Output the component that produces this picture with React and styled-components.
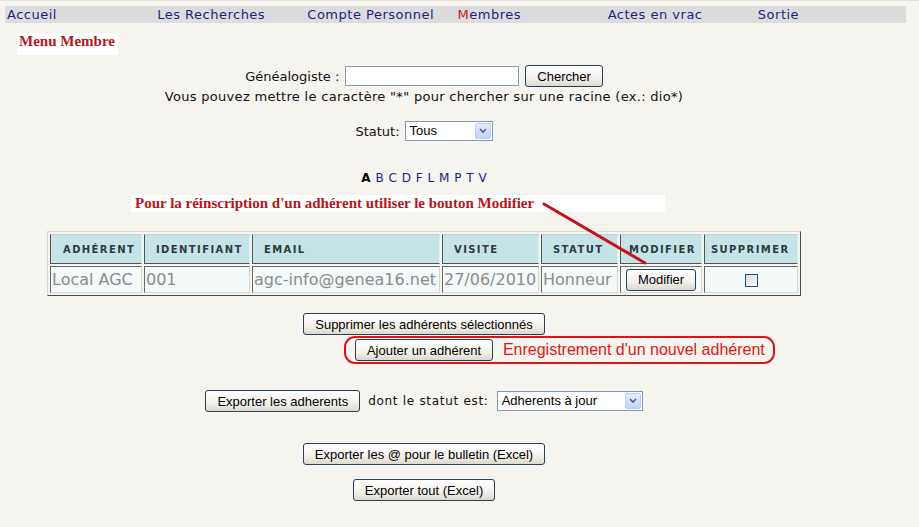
import React from 'react';
import styled, { createGlobalStyle } from 'styled-components';

const GlobalStyle = createGlobalStyle`
  body {
    margin: 0;
    background: #f5f4ee;
    font-family: "DejaVu Sans", Verdana, sans-serif;
  }
`;

const Page = styled.div`
  position: relative;
  width: 919px;
  min-height: 527px;
  border-top: 1px solid #e2e1dc;
  box-sizing: border-box;
`;

const Nav = styled.nav`
  display: flex;
  width: 901px;
  height: 17px;
  margin: 5px 0 0 5px;
  background: #dcdcdc;
`;

const NavLink = styled.a`
  width: 150px;
  padding-left: 2px;
  font-size: 13px;
  letter-spacing: 0.5px;
  line-height: 17px;
  color: #1c1c8c;
  text-decoration: none;
  span { color: #c8161e; }
`;

const MenuTitle = styled.div`
  display: inline-block;
  margin: 10px 0 0 17px;
  padding: 0 3px 0 2px;
  height: 22px;
  line-height: 22px;
  background: #fff;
  font: bold 15px "Liberation Serif", "Times New Roman", serif;
  color: #b5161e;
`;

const Main = styled.div`
  display: flex;
  flex-direction: column;
  align-items: center;
  width: 848px;
`;

const Row = styled.div`
  display: flex;
  align-items: center;
  gap: ${p => p.$gap || 6}px;
  margin-top: ${p => p.$top || 0}px;
  font-size: 13px;
  color: #111;
`;

const Hint = styled.div`
  font-size: 13px;
  letter-spacing: 0.3px;
  line-height: 16px;
  color: #111;
  margin-top: 2px;
`;

const TextInput = styled.input`
  width: 174px;
  height: 20px;
  box-sizing: border-box;
  border: 1px solid #7f9db9;
  background: #fff;
  margin: 0;
`;

const Button = styled.button`
  height: 22px;
  margin: 0;
  margin-top: ${p => p.$top || 0}px;
  padding: 0 11px;
  font: 13px "Liberation Sans", Arial, sans-serif;
  color: #000;
  border: 1px solid #2b3f55;
  border-radius: 3px;
  background: linear-gradient(#ffffff, #f2f1ec 60%, #dcd8cc);
  white-space: nowrap;
`;

const SelectBox = styled.div`
  position: relative;
  width: ${p => p.$width}px;
  height: 20px;
  box-sizing: border-box;
  border: 1px solid #7f9db9;
  background: #fff;
  font: 13px "Liberation Sans", Arial, sans-serif;
  line-height: 18px;
  padding-left: 4px;
  color: #000;
  text-align: left;
`;

const SelectArrow = styled.span`
  position: absolute;
  top: 1px;
  right: 1px;
  width: 16px;
  height: 16px;
  box-sizing: border-box;
  border: 1px solid #b9ccf2;
  border-radius: 2px;
  background: linear-gradient(#e3ebfd, #c3d4f9);
  display: flex;
  align-items: center;
  justify-content: center;
`;

const Letters = styled.div`
  margin-top: 30px;
  font-size: 12px;
  line-height: 14px;
  word-spacing: 1px;
  a { color: #1c1c8c; text-decoration: none; }
  b { color: #000; }
`;

const Notice = styled.div`
  align-self: flex-start;
  margin: 10px 0 0 131px;
  width: 534px;
  height: 17px;
  padding-left: 4px;
  box-sizing: border-box;
  background: #fff;
  font: bold 15px "Liberation Serif", "Times New Roman", serif;
  line-height: 17px;
  color: #b5161e;
  white-space: nowrap;
`;

const Table = styled.table`
  margin-top: 19px;
  border-collapse: separate;
  border-spacing: 2px;
  border: 1px solid;
  border-color: #d8d8d4 #4a4a4a #4a4a4a #d8d8d4;
  table-layout: fixed;
  width: 754px;
`;

const Th = styled.th`
  width: ${p => p.$w}px;
  box-sizing: border-box;
  height: 30px;
  padding: 0 0 0 ${p => p.$pad || 11}px;
  text-align: left;
  background: #c6e3e7;
  border-left: 1px solid #555;
  border-top: 1px solid #b5d6da;
  border-right: 1px solid #d9eef0;
  border-bottom: 1px solid #555;
  font-size: 10px;
  font-weight: bold;
  letter-spacing: 1.4px;
  color: #2d3b3c;
  white-space: nowrap;
  overflow: hidden;
`;

const Td = styled.td`
  box-sizing: border-box;
  height: 27px;
  padding: 0 1px;
  background: #f4f9f9;
  border: 1px solid;
  border-color: #6a6a6a #d6d6d2 #d6d6d2 #6a6a6a;
  font-size: 16px;
  color: #8c8c8c;
  text-align: ${p => (p.$center ? 'center' : 'left')};
  white-space: nowrap;
  overflow: hidden;
`;

const Check = styled.span`
  display: inline-block;
  width: 13px;
  height: 13px;
  box-sizing: border-box;
  border: 1px solid #1c5180;
  background: linear-gradient(135deg, #dcdcd7, #fbfbf9);
  vertical-align: middle;
`;

const AddWrap = styled.div`
  position: relative;
  margin-top: 4px;
`;

const AddNote = styled.div`
  position: absolute;
  left: -11px;
  top: -3px;
  width: 431px;
  height: 28px;
  box-sizing: border-box;
  border: 2px solid #d8141c;
  border-radius: 11px;
  padding-left: 157px;
  font: 16px "Liberation Sans", Arial, sans-serif;
  line-height: 24px;
  color: #e0161e;
  white-space: nowrap;
  pointer-events: none;
`;

const Label = styled.span`
  font-size: 12px;
  letter-spacing: 0.7px;
  color: #111;
`;

const Arrow = styled.svg`
  position: absolute;
  left: 540px;
  top: 199px;
`;

function Select({ width, value }) {
  return (
    <SelectBox $width={width}>
      {value}
      <SelectArrow>
        <svg width="8" height="6" viewBox="0 0 8 6">
          <path d="M1 1 L4 4 L7 1" fill="none" stroke="#4d6185" strokeWidth="1.6" />
        </svg>
      </SelectArrow>
    </SelectBox>
  );
}

const navItems = ['Accueil', 'Les Recherches', 'Compte Personnel', 'Membres', 'Actes en vrac', 'Sortie'];
const letters = ['B', 'C', 'D', 'F', 'L', 'M', 'P', 'T', 'V'];

export default function App() {
  return (
    <Page>
      <GlobalStyle />
      <Nav>
        {navItems.map(item => (
          <NavLink key={item} href="#">
            {item === 'Membres' ? <><span>M</span>embres</> : item}
          </NavLink>
        ))}
      </Nav>
      <MenuTitle>Menu Membre</MenuTitle>
      <Main>
        <Row $top={10}>
          <span>Généalogiste :</span>
          <TextInput type="text" />
          <Button>Chercher</Button>
        </Row>
        <Hint>Vous pouvez mettre le caractère "*" pour chercher sur une racine (ex.: dio*)</Hint>
        <Row $top={16} $gap={5}>
          <span>Statut:</span>
          <Select width={88} value="Tous" />
        </Row>
        <Letters>
          <b>A</b>{' '}
          {letters.map(l => (
            <React.Fragment key={l}><a href="#">{l}</a>{' '}</React.Fragment>
          ))}
        </Letters>
        <Notice>Pour la réinscription d'un adhérent utiliser le bouton Modifier</Notice>
        <Table>
          <thead>
            <tr>
              <Th $w={92} $pad={12}>ADHÉRENT</Th>
              <Th $w={106}>IDENTIFIANT</Th>
              <Th $w={188}>EMAIL</Th>
              <Th $w={97}>VISITE</Th>
              <Th $w={77}>STATUT</Th>
              <Th $w={82} $pad={8}>MODIFIER</Th>
              <Th $w={94} $pad={6}>SUPPRIMER</Th>
            </tr>
          </thead>
          <tbody>
            <tr>
              <Td>Local AGC</Td>
              <Td>001</Td>
              <Td>agc-info@genea16.net</Td>
              <Td>27/06/2010</Td>
              <Td>Honneur</Td>
              <Td $center><Button>Modifier</Button></Td>
              <Td $center><Check /></Td>
            </tr>
          </tbody>
        </Table>
        <Button $top={17}>Supprimer les adhérents sélectionnés</Button>
        <AddWrap>
          <Button>Ajouter un adhérent</Button>
          <AddNote>Enregistrement d'un nouvel adhérent</AddNote>
        </AddWrap>
        <Row $top={29} $gap={8}>
          <Button>Exporter les adherents</Button>
          <Label>dont le statut est:</Label>
          <Select width={146} value="Adherents à jour" />
        </Row>
        <Button $top={31}>Exporter les @ pour le bulletin (Excel)</Button>
        <Button $top={14}>Exporter tout (Excel)</Button>
      </Main>
      <Arrow width="110" height="70" viewBox="0 0 110 70">
        <line x1="4" y1="4" x2="105" y2="63" stroke="#c8101a" strokeWidth="3" strokeLinecap="round" />
      </Arrow>
    </Page>
  );
}
